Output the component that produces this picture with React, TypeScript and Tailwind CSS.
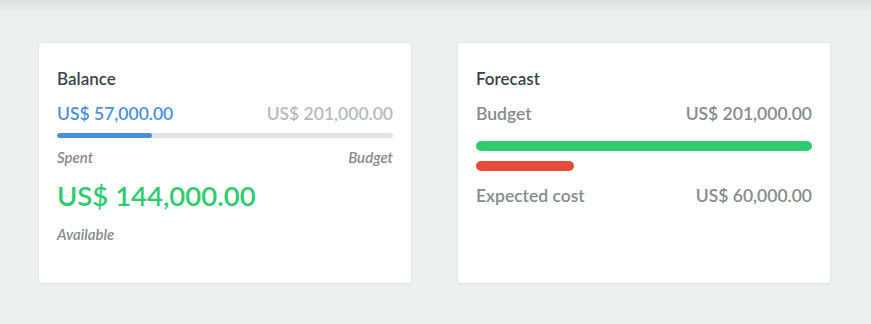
import React from 'react';

const font = { fontFamily: 'Lato, "Open Sans", sans-serif' };

const BalanceCard: React.FC = () => {
  const spent = 57000;
  const budget = 201000;
  const pct = (spent / budget) * 100;

  return (
    <div className="w-[374px] h-[242px] bg-white rounded-[3px] border border-[#e3e7e8] shadow-[0_1px_2px_rgba(0,0,0,0.04)] px-[18px] pt-6">
      <h3 className="text-[17px] leading-6 font-semibold text-[#3a434c]">Balance</h3>
      <div className="mt-[11px] flex justify-between text-[17.5px] leading-6 font-semibold">
        <span className="text-[#4a8fdc]">US$ 57,000.00</span>
        <span className="text-[#b3bbbf]">US$ 201,000.00</span>
      </div>
      <div className="mt-[7px] h-[5px] rounded-full bg-[#e1e4e5] overflow-hidden">
        <div className="h-full rounded-full bg-[#4a8fdc]" style={{ width: `${pct}%` }} />
      </div>
      <div className="mt-[9px] flex justify-between text-[15px] leading-5 italic font-semibold text-[#858c8e]">
        <span>Spent</span>
        <span>Budget</span>
      </div>
      <div className="mt-[13px] text-[27.5px] leading-8 font-semibold text-[#2ecc71]">US$ 144,000.00</div>
      <div className="mt-[12px] text-[15px] leading-5 italic font-semibold text-[#858c8e]">Available</div>
    </div>
  );
};

const ForecastCard: React.FC = () => {
  return (
    <div className="w-[374px] h-[242px] bg-white rounded-[3px] border border-[#e3e7e8] shadow-[0_1px_2px_rgba(0,0,0,0.04)] px-[18px] pt-6">
      <h3 className="text-[17px] leading-6 font-semibold text-[#3a434c]">Forecast</h3>
      <div className="mt-[11px] flex justify-between text-[17.5px] leading-6 font-semibold text-[#858c8e]">
        <span>Budget</span>
        <span>US$ 201,000.00</span>
      </div>
      <div className="mt-[15px] h-[10px] rounded-full bg-[#2ecc71]" />
      <div className="mt-[10px] h-[10px] w-[98px] rounded-full bg-[#e74c3c]" />
      <div className="mt-[13px] flex justify-between text-[17.5px] leading-6 font-semibold text-[#858c8e]">
        <span>Expected cost</span>
        <span>US$ 60,000.00</span>
      </div>
    </div>
  );
};

export default function App() {
  return (
    <div className="w-[871px] h-[324px] bg-[#ecf0f1] overflow-hidden" style={font}>
      <div className="h-3 bg-gradient-to-b from-[#dcdfe0] to-[#ecf0f1]" />
      <div className="pt-[30px] px-[38px] flex gap-[45px]">
        <BalanceCard />
        <ForecastCard />
      </div>
    </div>
  );
}
